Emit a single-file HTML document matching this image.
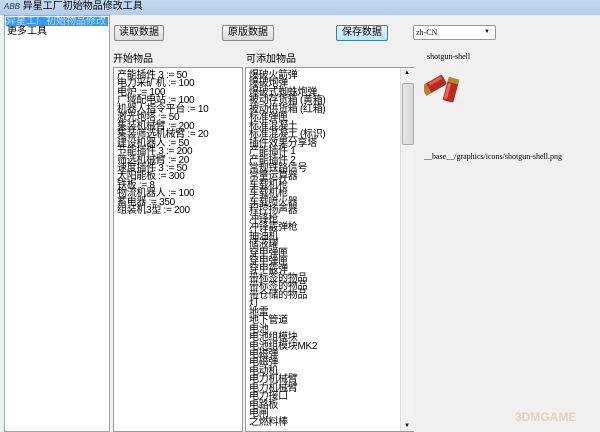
<!DOCTYPE html>
<html><head><meta charset="utf-8"><style>
body{margin:0;width:600px;height:432px;overflow:hidden;background:#f0f0f0;font-family:"Liberation Sans","Noto Sans CJK SC",sans-serif;font-size:10px;position:relative}
.a{position:absolute}
.title{left:0;top:0;width:600px;height:15px;background:linear-gradient(#c4d9f2,#b5cdeb);font-size:10px;line-height:14px}
.btn{border:1px solid #8a8a8a;border-radius:2px;background:linear-gradient(#f6f6f6,#dcdcdc);text-align:center;line-height:13px;font-size:10px}
.list{background:#fff;border:1px solid #9a9a9a;line-height:8.45px;font-size:10px;padding:4px 0 0 3px;box-sizing:border-box;overflow:hidden;letter-spacing:-0.3px}
.mono{font-family:"Liberation Serif",serif;font-size:8px}
</style></head><body>
<div class="a title"><span style="margin-left:4px;font-style:italic;font-size:8px;color:#335">ABB</span> 异星工厂初始物品修改工具</div>
<div class="a" style="left:4px;top:15px;width:106px;height:417px;background:#fff;border:1px solid #9aa;box-sizing:border-box">
<div style="background:#3399ff;color:#bfe0ff;line-height:9px;margin:1px;font-size:10px">异星工厂初始物品修改</div>
<div style="line-height:9px;margin-left:2px">更多工具</div></div>
<div class="a btn" style="left:114px;top:25px;width:48px;height:14px">读取数据</div>
<div class="a btn" style="left:222px;top:25px;width:50px;height:14px">原版数据</div>
<div class="a btn" style="left:336px;top:25px;width:50px;height:14px;border-color:#3c7fb1;background:linear-gradient(#eaf6fd,#bee6fd)">保存数据</div>
<div class="a" style="left:413px;top:25px;width:81px;height:13px;background:#fff;border:1px solid #999;border-radius:2px;font-size:8px;line-height:13px;font-family:'Liberation Serif',serif">&nbsp;zh-CN<span style="position:absolute;right:5px;font-size:6px">▼</span></div>
<div class="a" style="left:113px;top:50px">开始物品</div>
<div class="a" style="left:246px;top:50px">可添加物品</div>
<div class="a mono" style="left:427px;top:52px">shotgun-shell</div>
<svg class="a" style="left:424px;top:66px" width="45" height="42" viewBox="0 0 45 42">
<g transform="rotate(-30 14 22)"><rect x="4" y="12" width="20" height="11" rx="2" fill="#b82a20"/><rect x="0" y="12" width="6" height="11" fill="#b88030"/><rect x="8" y="13" width="14" height="3" fill="#e06050"/></g>
<g transform="rotate(-75 28 22)"><rect x="14" y="16" width="22" height="11" rx="2" fill="#c0281f"/><rect x="33" y="16" width="5" height="11" fill="#b8862e"/><rect x="16" y="17" width="16" height="3" fill="#e46a5a"/></g>
</svg>
<div class="a mono" style="left:424px;top:152px">__base__/graphics/icons/shotgun-shell.png</div>
<div class="a list" style="left:113px;top:67px;width:130px;height:365px">产能插件 3 := 50<br>电力采矿机 := 100<br>电炉 := 100<br>广域配电站 := 100<br>机器人指令平台 := 10<br>激光炮塔 := 50<br>集装机械臂 := 200<br>集装筛选机械臂 := 20<br>建设机器人 := 50<br>节能插件 3 := 200<br>筛选机械臂 := 20<br>速度插件 3 := 50<br>太阳能板 := 300<br>铁板 := 8<br>物流机器人 := 100<br>蓄电器 := 350<br>组装机3型 := 200</div>
<div class="a list" style="left:245px;top:67px;width:169px;height:365px">爆破火箭弹<br>爆破炮弹<br>爆破式蜘蛛炮弹<br>被动存货箱 (黄箱)<br>被动供货箱 (红箱)<br>标准弹匣<br>标准混凝土<br>标准混凝土 (标识)<br>插件效果分享塔<br>产能插件 1<br>产能插件 2<br>常规铁路信号<br>常量运算器<br>车载机枪<br>车载机枪<br>车载喷火器<br>程控扬声器<br>冲锋枪<br>冲锋霰弹枪<br>抽油机<br>储液罐<br>穿甲弹匣<br>穿甲弹匣<br>穿甲霰弹<br>带标签的物品<br>带标签的物品<br>带仓储的物品<br>灯<br>地雷<br>地下管道<br>电池<br>电池组模块<br>电池组模块MK2<br>电磁弹<br>电磁弹<br>电动机<br>电力机械臂<br>电力机械臂<br>电力接口<br>电路板<br>电闸<br>之燃料棒</div>
<div class="a" style="left:400px;top:68px;width:13px;height:363px;background:#f2f2f2;border-left:1px solid #ddd">
<div style="position:absolute;left:1px;top:15px;width:10px;height:60px;background:linear-gradient(90deg,#e8e8e8,#d6d6d6);border:1px solid #aaa;border-radius:2px"></div>
<div style="position:absolute;left:3px;top:2px;font-size:6px">▲</div><div style="position:absolute;left:3px;bottom:2px;font-size:6px">▼</div></div>
<div class="a" style="left:515px;top:410px;color:#d8c0a0;font-size:12px;font-weight:bold;opacity:.6">3DMGAME</div>
</body></html>
